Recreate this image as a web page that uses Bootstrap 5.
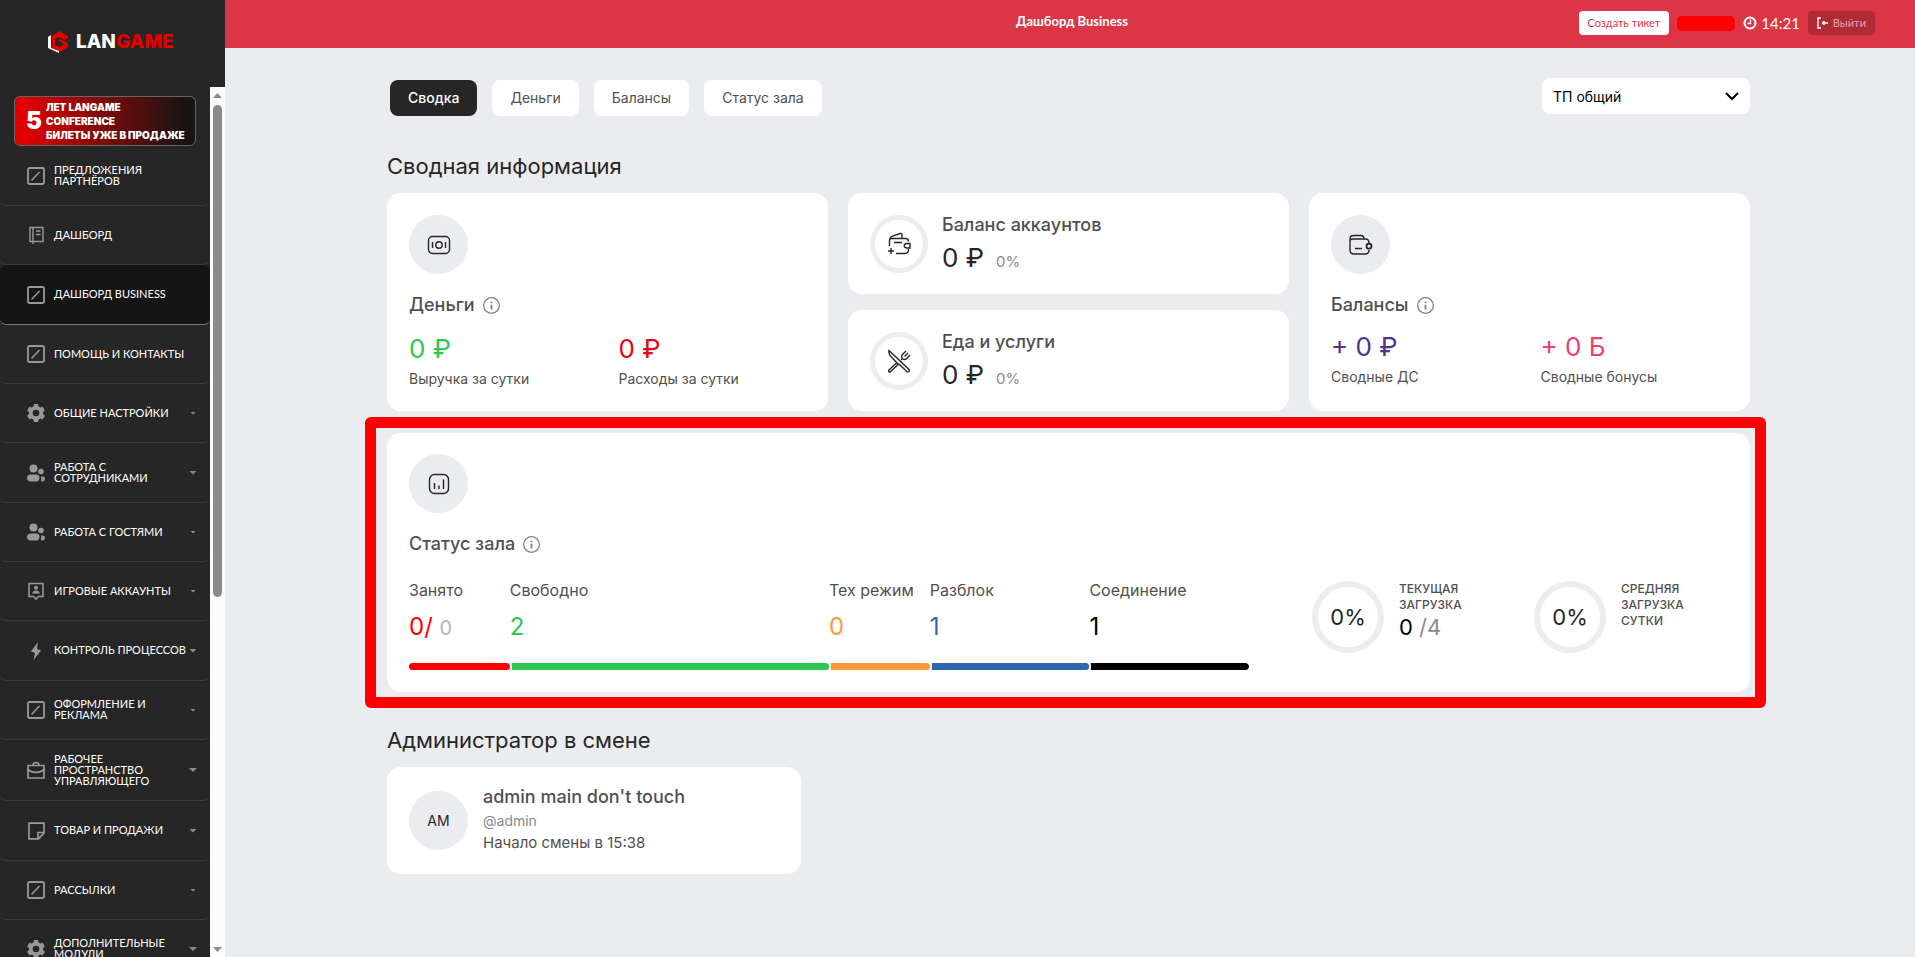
<!DOCTYPE html>
<html lang="ru">
<head>
<meta charset="utf-8">
<meta name="viewport" content="width=device-width, initial-scale=1">
<title>Дашборд Business</title>
<link rel="stylesheet" href="https://cdn.jsdelivr.net/npm/bootstrap@5.3.0/dist/css/bootstrap.min.css">
<style>
  body { font-family: Inter, "Liberation Sans", sans-serif; background: #ebecf0; color: #262626; overflow: hidden; }
  a { text-decoration: none; }

  /* Sidebar */
  .side { width: 225px; background: #262626; font-family: Lato, "Open Sans", sans-serif; }
  .brand { height: 87px; padding: 0 0 3px 48px; font: 800 19px/20px Inter, sans-serif; color: #fff; }
  .brand:hover { color: #fff; }
  .brand b { color: #e10000; font-weight: 800; }
  .brand span { margin-left: 7px; }
  .promo { height: 50px; margin: 9px 14px 1px; padding-left: 11px; border: 1px solid #666; border-radius: 6px;
    background: linear-gradient(90deg, #e00000 5%, #191414 93%); color: #fff; font: 900 10px/14px Inter, sans-serif; }
  .promo:hover { color: #fff; }
  .promo-num { font-size: 24px; line-height: 24px; }
  .menu-item { height: 59px; padding: 0 13px 0 27px; border-bottom: 1px solid #3b3b3b; border-radius: 6px;
    color: #fff; font-size: 11px; line-height: 11px; text-transform: uppercase; }
  .menu-item:hover { color: #fff; }
  li:nth-child(3n) .menu-item { height: 60px; }
  .menu-item.tall { height: 61px; }
  .menu-item.current { background: #151515; border-color: #777; }
  .menu-item svg { width: 18px; height: 18px; margin-right: 9px; color: #999; }
  .menu-item span { padding-bottom: 2px; }
  .caret { width: 8px; height: 4px; background: #8a8a8a; clip-path: polygon(0 0, 100% 0, 50% 100%); }
  .caret.slim { width: 6px; height: 3px; margin-right: 1px; }
  .rail { width: 15px; background: #fcfcfc; padding: 6px 3px 5px; }
  .rail-thumb { height: 492px; width: 9px; border-radius: 5px; background: #8b8b8b; margin-top: 7px; }
  .rail-up, .rail-down { width: 9px; height: 5px; background: #8b8b8b; clip-path: polygon(50% 0, 100% 100%, 0 100%); }
  .rail-down { transform: rotate(180deg); }

  /* Header */
  .top { height: 48px; background: #dc3545; padding-bottom: 2px; font-family: Lato, "Open Sans", sans-serif; color: #fff; }
  .top-title { font-size: 13px; line-height: 20px; font-weight: 700; padding-bottom: 4px; margin-left: 4px; }
  .top-lead { padding-left: 40px; }
  .top-tools { padding-right: 40px; }
  .top .btn { height: 24px; font-size: 11px; line-height: 16px; padding: 0 9px; border: 0; border-radius: 4px; }
  .top .btn-ticket, .top .btn-ticket:hover { background: #fff; color: #dc3545; }
  .top .btn-exit, .top .btn-exit:hover { background: #b02a37; color: #eaa0a8; }
  .pill { width: 58px; height: 15px; border-radius: 5px; background: red; }
  .time { font-size: 15px; line-height: 20px; }

  /* Content */
  .content { padding: 30px 3px 0 0; }
  .page-wrap { max-width: 1363px; }
  .tabs { padding: 2px 0 0 3px; gap: 15px; }
  .tabs .btn { height: 36px; padding: 0 18px; border: 0; border-radius: 8px; background: #fff; color: #505050; font-size: 14px; line-height: 20px; }
  .tabs .btn.on { background: #262626; color: #fff; font-weight: 500; }
  .club { width: 208px; height: 36px; border: 0; border-radius: 8px; padding: 0 11px; font-size: 14px; color: #000; background-color: #fff;
    background-position: right 11px center; background-size: 14px 14px;
    background-image: url("data:image/svg+xml,%3csvg xmlns='http://www.w3.org/2000/svg' viewBox='0 0 14 14'%3e%3cpath fill='none' stroke='%23000' stroke-width='2' d='M1 4l6 6 6-6'/%3e%3c/svg%3e"); }
  .head { font-size: 22px; line-height: 28px; font-weight: 400; margin: 36px 0 13px; }
  .head.low { margin-top: 34px; }
  .panel { background: #fff; border-radius: 14px; padding: 22px; }
  .cards { display: grid; grid-template-columns: repeat(3, 1fr); gap: 20px; }
  .pair { display: grid; grid-template-columns: 1fr 1fr; column-gap: 22px; margin-top: 16px; }
  .pair.up { margin-top: 14px; }
  .disc { width: 59px; height: 59px; border-radius: 50%; background: #ebecf0; font-size: 14px; flex: none; }
  .disc svg, .ring svg { width: 24px; height: 24px; }
  .ring { width: 58px; height: 58px; border: 5px solid #ededed; border-radius: 50%; flex: none; }
  .ring.big { width: 72px; height: 72px; border-width: 6px; font-size: 22px; }
  .name { font-size: 18px; line-height: 24px; font-weight: 500; color: #505050; margin: 0; }
  .named { gap: 8px; margin-top: 19px; }
  .value { font-size: 26px; line-height: 32px; }
  .note { font-size: 14px; line-height: 20px; color: #505050; }
  .pair .note { margin-top: 4px; }
  .mini { height: 101px; padding-top: 0; padding-bottom: 0; gap: 14px; }
  .mini .value { margin-top: 5px; }
  .pct { font-size: 15px; line-height: 16px; color: #8a8a8a; margin-left: 12px; }
  .green { color: #2dc84d; } .red { color: #e30613; } .violet { color: #503291; } .pink { color: #ee3e74; }

  .hall { margin-top: 22px; padding-top: 21px; }
  .frame { inset: -16px -16px -16px -22px; border: 11px solid red; border-radius: 6px; pointer-events: none; }
  .load { margin-top: 24px; }
  .states { width: 840px; }
  .state-name { font-size: 16px; line-height: 20px; color: #505050; white-space: nowrap; }
  .state-num { font-size: 24px; line-height: 28px; margin-top: 13px; }
  .faint { font-size: 20px; line-height: 20px; color: #b4b4b4; }
  .seg-row { background: #ebecf0; border-radius: 4px; height: 7px; margin-top: 22px; overflow: hidden; }
  .seg { border-radius: 0 4px 4px 0; }
  .seg + .seg { border-left: 2px solid #ebecf0; }
  .gauges { padding: 1px 0 0 63px; }
  .gauge { width: 222px; gap: 15px; }
  .gauge-name { font-size: 12px; line-height: 16px; font-weight: 500; color: #505050; width: 80px; }
  .gauge-count { font-size: 22px; line-height: 28px; color: #8a8a8a; }
  .gauge-count span { color: #000; }
  .admin { max-width: 414px; height: 107px; padding: 0 22px; gap: 15px; }
  .handle { color: #8a8a8a; margin: 2px 0; }
  .shift { font-size: 15px; line-height: 20px; color: #505050; }
</style>
</head>
<body>
<svg class="d-none" xmlns="http://www.w3.org/2000/svg">
  <symbol id="i-slash" viewBox="0 0 18 18"><rect x="1" y="1" width="16" height="16" rx="1.5" fill="none" stroke="currentColor" stroke-width="1.8"/><path d="M4.500 13.500l8-8.500" stroke="currentColor" stroke-width="1.500"/></symbol>
  <symbol id="i-book" viewBox="0 0 18 18"><path d="M3 1.500h13v14H3zM6 1v17M9 5h4.500M9 8.500h4.500" fill="none" stroke="currentColor" stroke-width="1.4"/></symbol>
  <symbol id="i-gear" viewBox="0 0 18 18"><path fill="currentColor" fill-rule="evenodd" d="M7 0h4l.6 2.600 1.700 1L15.800 2.800l2 3.500L16 8.200v1.700l1.900 1.800-2 3.500-2.600-.8-1.600 1L11 18H7l-.6-2.600-1.600-1-2.600.8-2-3.500L2 9.900V8.200L.2 6.300l2-3.500 2.600.8 1.600-1zM9 5.700a3.300 3.300 0 1 0 0 6.600 3.300 3.300 0 0 0 0-6.600z"/></symbol>
  <symbol id="i-people" viewBox="0 0 18 18"><g fill="currentColor"><circle cx="6.500" cy="4.500" r="4"/><circle cx="14" cy="7.500" r="2.800"/><path d="M3.500 10.500h6c2 0 3 1.500 3 3.200S11.500 17.500 9.500 17.500h-6C1.500 17.500 0 16 0 14s1.500-3.500 3.500-3.500zM14.200 12.200c2.500 0 3.800 1 3.800 2.700 0 1.600-1.300 2.600-3.800 2.600z"/></g></symbol>
  <symbol id="i-account" viewBox="0 0 18 18"><path d="M2 1.500h14v13h-4.500L9 17l-2.500-2.500H2z" fill="none" stroke="currentColor" stroke-width="1.600"/><circle cx="9" cy="5.700" r="2" fill="currentColor"/><path d="M5.300 11.500c0-4 7.400-4 7.400 0z" fill="currentColor"/></symbol>
  <symbol id="i-bolt" viewBox="0 0 18 18"><path d="M11 0L4 9.500l4 1.500-1.500 7L14 8.500 10 7z" fill="currentColor"/></symbol>
  <symbol id="i-case" viewBox="0 0 18 18"><path d="M1 4.500h16v12.500H1zM6 4.500C6 .5 12 .5 12 4.500M1 8c3 4.500 13 4.500 16 0" fill="none" stroke="currentColor" stroke-width="1.700"/></symbol>
  <symbol id="i-note" viewBox="0 0 18 18"><path d="M2 1.200h15v10l-5.500 5.600H2zM17 10.500h-6v6" fill="none" stroke="currentColor" stroke-width="1.700"/></symbol>
  <symbol id="i-info" viewBox="0 0 16 16"><circle cx="8" cy="8" r="7.400" fill="none" stroke="#808288" stroke-width="1.200"/><path d="M8 4.300v1.500M8 7.200v4.600" stroke="#808288" stroke-width="1.700"/></symbol>
</svg>

<div class="d-flex vh-100">
  <aside class="side d-flex flex-column flex-shrink-0">
    <a href="#" class="brand d-flex align-items-center flex-shrink-0">
      <svg class="flex-shrink-0" width="21" height="22" viewBox="0 0 21 22"><path fill="#e10000" d="M11 0l9 5v2.500L16 9l-5-3-4 2.300v5.500l4 2.400 4-2.400v-1.500L10 9.500 11.500 8 20 12v4l-9 5.200-7-4V5z"/><path fill="#fff" d="M0 6l3-2v13l8 3v2L0 17z"/></svg>
      <span>LAN<b>GAME</b></span>
    </a>
    <div class="d-flex flex-grow-1 overflow-hidden">
      <nav class="flex-grow-1 overflow-hidden">
        <a href="#" class="promo d-flex align-items-center">
          <span class="promo-num">5</span>
          <span class="ms-1 text-nowrap">ЛЕТ LANGAME<br>CONFERENCE<br>БИЛЕТЫ УЖЕ В ПРОДАЖЕ</span>
        </a>
        <ul class="list-unstyled mb-0">
          <li><a href="#" class="menu-item d-flex align-items-center"><svg class="flex-shrink-0"><use href="#i-slash"/></svg><span>Предложения<br>партнёров</span></a></li>
          <li><a href="#" class="menu-item d-flex align-items-center"><svg class="flex-shrink-0"><use href="#i-book"/></svg><span>Дашборд</span></a></li>
          <li><a href="#" class="menu-item current d-flex align-items-center"><svg class="flex-shrink-0"><use href="#i-slash"/></svg><span>Дашборд Business</span></a></li>
          <li><a href="#" class="menu-item d-flex align-items-center"><svg class="flex-shrink-0"><use href="#i-slash"/></svg><span>Помощь и контакты</span></a></li>
          <li><a href="#" class="menu-item d-flex align-items-center"><svg class="flex-shrink-0"><use href="#i-gear"/></svg><span>Общие настройки</span><i class="caret slim ms-auto"></i></a></li>
          <li><a href="#" class="menu-item d-flex align-items-center"><svg class="flex-shrink-0"><use href="#i-people"/></svg><span>Работа с<br>сотрудниками</span><i class="caret ms-auto"></i></a></li>
          <li><a href="#" class="menu-item d-flex align-items-center"><svg class="flex-shrink-0"><use href="#i-people"/></svg><span>Работа с гостями</span><i class="caret slim ms-auto"></i></a></li>
          <li><a href="#" class="menu-item d-flex align-items-center"><svg class="flex-shrink-0"><use href="#i-account"/></svg><span>Игровые аккаунты</span><i class="caret slim ms-auto"></i></a></li>
          <li><a href="#" class="menu-item d-flex align-items-center"><svg class="flex-shrink-0"><use href="#i-bolt"/></svg><span class="text-nowrap">Контроль процессов</span><i class="caret ms-auto flex-shrink-0"></i></a></li>
          <li><a href="#" class="menu-item d-flex align-items-center"><svg class="flex-shrink-0"><use href="#i-slash"/></svg><span>Оформление и<br>реклама</span><i class="caret slim ms-auto"></i></a></li>
          <li><a href="#" class="menu-item tall d-flex align-items-center"><svg class="flex-shrink-0"><use href="#i-case"/></svg><span>Рабочее<br>пространство<br>управляющего</span><i class="caret ms-auto"></i></a></li>
          <li><a href="#" class="menu-item d-flex align-items-center"><svg class="flex-shrink-0"><use href="#i-note"/></svg><span>Товар и продажи</span><i class="caret ms-auto"></i></a></li>
          <li><a href="#" class="menu-item d-flex align-items-center"><svg class="flex-shrink-0"><use href="#i-slash"/></svg><span>Рассылки</span><i class="caret slim ms-auto"></i></a></li>
          <li><a href="#" class="menu-item d-flex align-items-center"><svg class="flex-shrink-0"><use href="#i-gear"/></svg><span>Дополнительные<br>модули</span><i class="caret ms-auto"></i></a></li>
        </ul>
      </nav>
      <div class="rail d-flex flex-column align-items-center flex-shrink-0">
        <div class="rail-up"></div>
        <div class="rail-thumb"></div>
        <div class="rail-down mt-auto"></div>
      </div>
    </div>
  </aside>

  <div class="flex-grow-1">
    <header class="top d-flex align-items-center">
      <div class="top-lead col"></div>
      <div class="top-title">Дашборд Business</div>
      <div class="top-tools col d-flex align-items-center justify-content-end gap-2">
        <button type="button" class="btn btn-ticket">Создать тикет</button>
        <span class="pill"></span>
        <span class="time d-flex align-items-center gap-1"><svg width="14" height="14" viewBox="0 0 14 14" fill="none" stroke="#fff"><circle cx="7" cy="7" r="5.500" stroke-width="2"/><path d="M7.500 3.500v4H4.500" stroke-width="1.300"/></svg>14:21</span>
        <button type="button" class="btn btn-exit d-flex align-items-center"><svg class="me-1" width="12" height="12" viewBox="0 0 12 12" fill="none" stroke="#fff" stroke-width="1.300"><path d="M4 1H1v10h3M11 6H5.500M7.500 4L5.500 6l2 2"/></svg>Выйти</button>
      </div>
    </header>

    <main class="content">
      <div class="page-wrap mx-auto">
        <div class="d-flex justify-content-between align-items-start">
          <nav class="tabs d-flex">
            <button type="button" class="btn on">Сводка</button>
            <button type="button" class="btn">Деньги</button>
            <button type="button" class="btn">Балансы</button>
            <button type="button" class="btn">Статус зала</button>
          </nav>
          <select class="form-select club" aria-label="Клуб"><option>ТП общий</option></select>
        </div>

        <h1 class="head">Сводная информация</h1>
        <div class="cards">
          <section class="panel">
            <div class="disc d-flex align-items-center justify-content-center"><svg viewBox="0 0 24 24" fill="none" stroke="#262626" stroke-width="1.400"><rect x="1.500" y="3.500" width="21" height="17" rx="4"/><circle cx="12" cy="12" r="3.200"/><path d="M5.500 9v6M18.500 9v6"/></svg></div>
            <div class="named d-flex align-items-center"><h2 class="name">Деньги</h2><svg width="17" height="17"><use href="#i-info"/></svg></div>
            <div class="pair">
              <div><div class="value green">0 ₽</div><div class="note">Выручка за сутки</div></div>
              <div><div class="value red">0 ₽</div><div class="note">Расходы за сутки</div></div>
            </div>
          </section>
          <div class="d-flex flex-column gap-3">
            <section class="panel mini d-flex align-items-center">
              <div class="ring d-flex align-items-center justify-content-center"><svg viewBox="0 0 24 24" fill="none" stroke="#262626" stroke-width="1.400"><path d="M2.500 14V8.500C2.500 7 3.500 6.500 5 6.500h13.500c2 0 3 1 3 3M21.500 17c0 3-1 4.500-3.500 4.500H9M3 6.500c0-1.200.6-1.700 2-2.200l8-2.800c1.500-.4 2 .2 2 1.500v3.500M7 10.500h8M23 11.500h-3.500c-3 .5-3 4 0 4.500H23zM1 19h6M4 16v6"/></svg></div>
              <div><h2 class="name">Баланс аккаунтов</h2><div class="value">0 ₽<span class="pct">0%</span></div></div>
            </section>
            <section class="panel mini d-flex align-items-center">
              <div class="ring d-flex align-items-center justify-content-center"><svg viewBox="0 0 24 24" fill="none" stroke="#262626" stroke-width="1.400"><path d="M2 1.500L22 20.500c1 1.500-.8 3-2.200 2L13 16l-2-1L3.500 7C2 5 1.500 3.500 2 1.500zM9.500 14L2 21c-1 1.500.3 2.600 1.500 1.700L11 15.500M14 11l2-2M15.500 5.500c-1.300 1.500-1 3.500.5 4.500 1.200.9 2.700.5 3.700-.5l3.300-3.500M15.500 5.500L19 2M17.500 7.500L21 4"/></svg></div>
              <div><h2 class="name">Еда и услуги</h2><div class="value">0 ₽<span class="pct">0%</span></div></div>
            </section>
          </div>
          <section class="panel">
            <div class="disc d-flex align-items-center justify-content-center"><svg viewBox="0 0 24 24" fill="none" stroke="#262626" stroke-width="1.400"><path d="M20 10.500C20 7 19 6 16 6H4C2 6 1 6.500 1 8v9c0 3 1 4 4 4h11c3 0 4-1 4-4M1 8V6c0-2.500 1-3.500 3.500-3.500H12C14.500 2.500 15 4 15 6M6 15.500h7"/><circle cx="20" cy="13.200" r="2.500" stroke-width="1.800"/></svg></div>
            <div class="named d-flex align-items-center"><h2 class="name">Балансы</h2><svg width="17" height="17"><use href="#i-info"/></svg></div>
            <div class="pair up">
              <div><div class="value violet">+ 0 ₽</div><div class="note">Сводные ДС</div></div>
              <div><div class="value pink">+ 0 Б</div><div class="note">Сводные бонусы</div></div>
            </div>
          </section>
        </div>

        <section class="panel hall position-relative">
          <div class="frame position-absolute"></div>
          <div class="disc d-flex align-items-center justify-content-center"><svg viewBox="0 0 24 24" fill="none" stroke="#262626" stroke-width="1.400"><rect x="2.500" y="2.500" width="19" height="19" rx="5"/><path d="M7.500 11v6M12 13.500V17M16.500 7.500V17"/></svg></div>
          <div class="named d-flex align-items-center"><h2 class="name">Статус зала</h2><svg width="17" height="17"><use href="#i-info"/></svg></div>
          <div class="load d-flex">
            <div class="states flex-shrink-0">
              <div class="d-flex">
                <div style="width:12%"><div class="state-name">Занято</div><div class="state-num" style="color:#f00">0/ <span class="faint">0</span></div></div>
                <div style="width:38%"><div class="state-name">Свободно</div><div class="state-num green">2</div></div>
                <div style="width:12%"><div class="state-name">Тех режим</div><div class="state-num" style="color:#ff9838">0</div></div>
                <div style="width:19%"><div class="state-name">Разблок</div><div class="state-num" style="color:#2e67ad">1</div></div>
                <div style="width:19%"><div class="state-name">Соединение</div><div class="state-num" style="color:#000">1</div></div>
              </div>
              <div class="seg-row d-flex">
                <div class="seg" style="width:12%;background:#f00"></div>
                <div class="seg" style="width:38%;background:#2dc84d"></div>
                <div class="seg" style="width:12%;background:#ff9838"></div>
                <div class="seg" style="width:19%;background:#2e67ad"></div>
                <div class="seg" style="width:19%;background:#000"></div>
              </div>
            </div>
            <div class="gauges d-flex">
              <div class="gauge d-flex flex-shrink-0">
                <div class="ring big d-flex align-items-center justify-content-center">0%</div>
                <div><div class="gauge-name">ТЕКУЩАЯ ЗАГРУЗКА</div><div class="gauge-count"><span>0</span> /4</div></div>
              </div>
              <div class="gauge d-flex">
                <div class="ring big d-flex align-items-center justify-content-center">0%</div>
                <div class="gauge-name">СРЕДНЯЯ ЗАГРУЗКА СУТКИ</div>
              </div>
            </div>
          </div>
        </section>

        <h2 class="head low">Администратор в смене</h2>
        <section class="panel admin d-flex align-items-center">
          <div class="disc d-flex align-items-center justify-content-center">AM</div>
          <div class="pb-1">
            <h3 class="name">admin main don't touch</h3>
            <div class="note handle">@admin</div>
            <div class="shift">Начало смены в 15:38</div>
          </div>
        </section>
      </div>
    </main>
  </div>
</div>
<script src="https://cdn.jsdelivr.net/npm/bootstrap@5.3.0/dist/js/bootstrap.bundle.min.js"></script>
</body>
</html>
